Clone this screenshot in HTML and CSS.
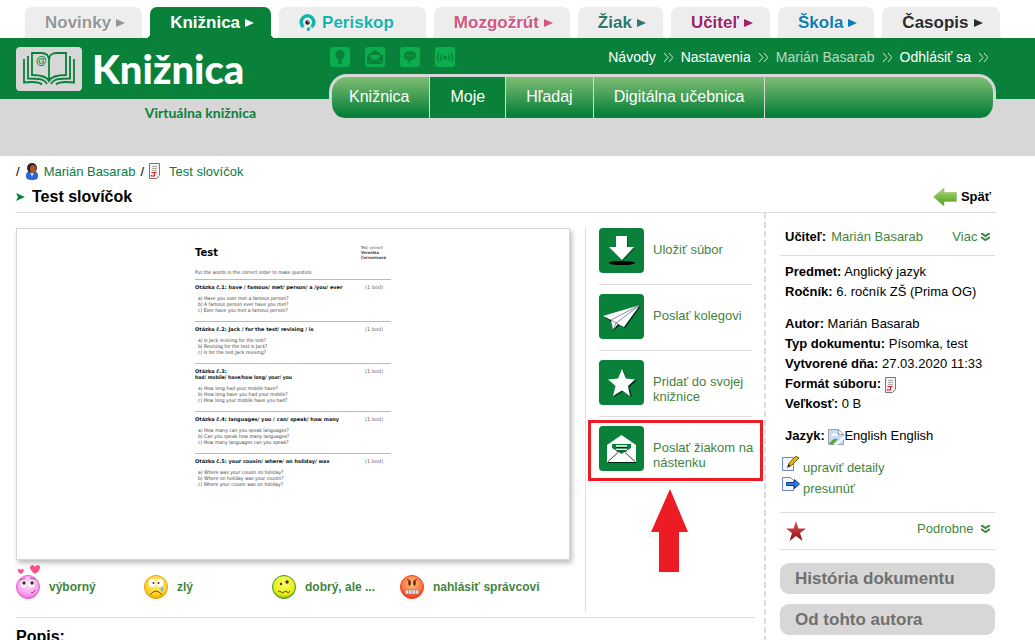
FILE: index.html
```html
<!DOCTYPE html>
<html lang="sk">
<head>
    <meta charset="UTF-8">
    <meta name="viewport" content="width=device-width, initial-scale=1.0">
    <title>Knižnica - Test slovíčok</title>
    <link rel="stylesheet" href="styles.css">
</head>
<body>

    <!-- Portal tabs -->
    <nav class="tabs">
        <a href="#" class="tab novinky">Novinky <i></i></a>
        <a href="#" class="tab active">Knižnica <i></i></a>
        <a href="#" class="tab periskop">
            <svg width="17" height="17" viewBox="0 0 17 17"><path d="M4.500 13A6.300 6.300 0 1 1 12.500 13" fill="none" stroke="#12b5ad" stroke-width="3.500"/><circle cx="8.500" cy="8.500" r="2.200" fill="#222"/><circle cx="9.200" cy="7.800" r=".7" fill="#fff"/><path d="M8 13.500h4l-2 3.500H8z" fill="#12b5ad"/></svg>
            Periskop</a>
        <a href="#" class="tab mozgozrut">Mozgožrút <i></i></a>
        <a href="#" class="tab ziak">Žiak <i></i></a>
        <a href="#" class="tab ucitel">Učiteľ <i></i></a>
        <a href="#" class="tab skola">Škola <i></i></a>
        <a href="#" class="tab casopis">Časopis <i></i></a>
    </nav>

    <!-- Header -->
    <header class="header">
        <div class="brand">
            <div class="brand-top">
                <svg class="logo" width="66" height="44" viewBox="0 0 66 44">
                    <rect width="66" height="44" rx="4" fill="#d7d7d7"/>
                    <g fill="none" stroke="#0a813a" stroke-width="1.800">
                        <path d="M33 34C31 30 27 28 16 28V6h9c5 0 8 2 8 7 0-5 3-7 8-7h9v22c-11 0-15 2-17 6zM33 12v22"/>
                        <path d="M12 9v22.500c10 0 16 0 19 5.500M54 9v22.500c-10 0-16 0-19 5.500"/>
                        <path d="M8 12v23.500c9-1 15-1 18 2M58 12v23.500c-9-1-15-1-18 2"/>
                    </g>
                    <text x="20" y="17" class="logo-at">@</text>
                </svg>
                <span class="brand-name">Knižnica</span>
            </div>
            <div class="brand-sub">Virtuálna knižnica</div>
        </div>
        <div class="header-right">
            <div class="toolbar">
                <div class="quick">
                    <a href="#" aria-label="Tipy"><svg width="20" height="20" viewBox="0 0 20 20"><path d="M10 3a4.500 4.500 0 0 1 3 8l-1 2.500H8L7 11a4.500 4.500 0 0 1 3-8zM8 14h4v2l-1 1H9l-1-1z"/></svg></a>
                    <a href="#" aria-label="Správy"><svg width="20" height="20" viewBox="0 0 20 20"><path d="M2 8.500 10 3l8 5.500V17H2z"/><path d="M5 8h10v2l-5 3-5-3z" fill="#0bae4f"/><path d="M2.500 16.500 8 12M17.500 16.500 12 12" stroke="#0bae4f" fill="none"/></svg></a>
                    <a href="#" aria-label="Diskusia"><svg width="20" height="20" viewBox="0 0 20 20"><path d="M10 4c4 0 6 2 6 4.500S14 13 11 13c0 2-1 3-3 4 1-1.500 1-3 0-4-3-.5-4-2-4-4.500C4 6 6 4 10 4z"/><path d="M7 8h1.500v1.500H7zM9.500 8H11v1.500H9.500zM12 8h1.500v1.500H12z" fill="#0bae4f"/></svg></a>
                    <a href="#" aria-label="Vysielanie"><svg width="20" height="20" viewBox="0 0 20 20"><circle cx="10" cy="10.500" r="2"/><path d="M6.500 7.500q-2 3 0 6M13.500 7.500q2 3 0 6M4 5.500q-3 5 0 10M16 5.500q3 5 0 10" fill="none" stroke="#0a813a" stroke-width="1.300"/></svg></a>
                </div>
                <div class="user-links">
                    <a href="#">Návody</a><svg width="9" height="9" viewBox="0 0 9 9"><path d="M0 0l4 4.500L0 9M5 0l4 4.500L5 9"/></svg>
                    <a href="#">Nastavenia</a><svg width="9" height="9" viewBox="0 0 9 9"><path d="M0 0l4 4.500L0 9M5 0l4 4.500L5 9"/></svg>
                    <a href="#" class="user">Marián Basarab</a><svg width="9" height="9" viewBox="0 0 9 9"><path d="M0 0l4 4.500L0 9M5 0l4 4.500L5 9"/></svg>
                    <a href="#">Odhlásiť sa</a><svg width="9" height="9" viewBox="0 0 9 9"><path d="M0 0l4 4.500L0 9M5 0l4 4.500L5 9"/></svg>
                </div>
            </div>
            <nav class="menu">
                <a href="#">Knižnica</a>
                <a href="#" class="selected">Moje</a>
                <a href="#">Hľadaj</a>
                <a href="#">Digitálna učebnica</a>
            </nav>
        </div>
    </header>

    <div class="page">
        <div class="crumbs">
            <span>/</span>
            <svg width="14" height="17" viewBox="0 0 14 17"><path d="M1 13c0-4 2-5 6-5s6 1 6 5c0 3-2 4-6 4s-6-1-6-4z" fill="#2c65d8"/><path d="M5 9h4l-2 5z" fill="#cfe3ff"/><ellipse cx="7" cy="5" rx="5" ry="5" fill="#33241f"/><ellipse cx="8" cy="6" rx="3" ry="4" fill="#a35a2c"/></svg>
            <a href="#">Marián Basarab</a>
            <span>/</span>
            <svg width="11" height="16" viewBox="0 0 11 16"><path d="M.5.5h10v12l-3 3h-7z" fill="#f4f4f4" stroke="#777"/><path d="M3 3.500h5M3 5.500h5M3 7.500h5" stroke="#aaa"/><path d="M2.500 9.500h5M5.500 9v4H2.500v-1" stroke="#c22" fill="none" stroke-width="1.200"/></svg>
            <a href="#" class="doc-link">Test slovíčok</a>
        </div>

        <div class="title-row">
            <svg width="9" height="8" viewBox="0 0 9 8"><path d="M0 0l9 4-9 4 2-4z" fill="#0a813a"/></svg>
            <h1>Test slovíčok</h1>
            <a href="#" class="back">
                <svg width="24" height="20" viewBox="0 0 24 20"><defs><linearGradient id="arrow" x1="0" y1="0" x2="0" y2="1"><stop offset="0" stop-color="#b0dc70"/><stop offset="1" stop-color="#4a9a1c"/></linearGradient></defs><path d="M.5 10 11 1v4.500h12.500v9H11V19z" fill="url(#arrow)" stroke="#8fbf63" stroke-width=".6"/></svg>
                Späť</a>
        </div>

        <div class="columns">
            <main class="main">
                <div class="document">
                    <div class="left">
                        <div class="preview">
                            <div class="paper">
                                <div class="paper-head">
                                    <h2>Test</h2>
                                    <p>Test vytvoril<br><b>Veronika<br>Červenicová</b></p>
                                </div>
                                <p class="intro">Put the words in the correct order to make question.</p>
                                <section>
                                    <h3>Otázka č.1: have / famous/ met/ person/ a /you/ ever <span>(1 bod)</span></h3>
                                    <p>a) Have you ever met a famous person?<br>b) A famous person ever have you met?<br>c) Ever have you met a famous person?</p>
                                </section>
                                <section>
                                    <h3>Otázka č.2: Jack / for the test/ revising / is <span>(1 bod)</span></h3>
                                    <p>a) Is Jack revising for the test?<br>b) Revising for the test is Jack?<br>c) Is for the test Jack revising?</p>
                                </section>
                                <section>
                                    <h3>Otázka č.3: <span>(1 bod)</span></h3>
                                    <h4>had/ mobile/ have/how long/ your/ you</h4>
                                    <p>a) How long had your mobile have?<br>b) How long have you had your mobile?<br>c) How long your mobile have you had?</p>
                                </section>
                                <section>
                                    <h3>Otázka č.4: languages/ you / can/ speak/ how many <span>(1 bod)</span></h3>
                                    <p>a) How many can you speak languages?<br>b) Can you speak how many languages?<br>c) How many languages can you speak?</p>
                                </section>
                                <section>
                                    <h3>Otázka č.5: your cousin/ where/ on holiday/ was <span>(1 bod)</span></h3>
                                    <p>a) Where was your cousin on holiday?<br>b) Where on holiday was your cousin?<br>c) Where your cousin was on holiday?</p>
                                </section>
                            </div>
                        </div>

                        <div class="ratings">
                            <a href="#">
                                <svg width="24" height="34" viewBox="0 0 24 34"><defs><radialGradient id="pink" cy=".35" r=".7"><stop offset="0" stop-color="#ffe2fb"/><stop offset=".7" stop-color="#fb9cee"/><stop offset="1" stop-color="#e84fc8"/></radialGradient></defs><circle cx="12" cy="22" r="11.500" fill="url(#pink)" stroke="#e45fc5"/><path d="M19 9c-6-4-6-8-3-9 2-.3 3 2 3 2s1-2 3-2c4 1 2 6-3 9zM5 9C1 7 1 4 3 4l2 1 1-1c3 0 2 3-1 5z" fill="#ff4f86"/><ellipse cx="7.500" cy="19" rx="3" ry="3.500" fill="#fff"/><ellipse cx="15.500" cy="19" rx="3" ry="3.500" fill="#fff"/><circle cx="8" cy="18" r="1.700" fill="#333"/><circle cx="16" cy="18" r="1.700" fill="#333"/><path d="M4 15l5-2M14 13l5 1M15 28q3 0 4-3" stroke="#8a2f6f" stroke-width=".8" fill="none"/></svg>
                                výborný</a>
                            <a href="#">
                                <svg width="24" height="34" viewBox="0 0 24 34"><defs><radialGradient id="yellow" cy=".35" r=".7"><stop offset="0" stop-color="#fff58a"/><stop offset=".7" stop-color="#ffd21c"/><stop offset="1" stop-color="#f29400"/></radialGradient></defs><circle cx="12" cy="22" r="11.500" fill="url(#yellow)" stroke="#ee9a1c"/><ellipse cx="8" cy="18" rx="3.500" ry="4" fill="#fff"/><ellipse cx="16" cy="18" rx="3.500" ry="4" fill="#fff"/><circle cx="9.500" cy="18" r="1" fill="#522"/><circle cx="14.500" cy="18" r="1" fill="#522"/><path d="M6 30q6-8 12 0" stroke="#8a4a00" fill="none"/><path d="M18 21q3 5 0 5t0-5z" fill="#68b9ee"/></svg>
                                zlý</a>
                            <a href="#">
                                <svg width="24" height="34" viewBox="0 0 24 34"><defs><radialGradient id="lime" cy=".35" r=".7"><stop offset="0" stop-color="#ffff70"/><stop offset=".7" stop-color="#e4ec10"/><stop offset="1" stop-color="#5ca614"/></radialGradient></defs><circle cx="12" cy="22" r="11.500" fill="url(#lime)" stroke="#3d9640"/><circle cx="9" cy="19" r="1.200" fill="#621"/><circle cx="15" cy="17" r="1.700" fill="#621"/><path d="M6 27q2-2 3 0t3 0 3 0 3-1" stroke="#6b3a00" fill="none"/></svg>
                                dobrý, ale ...</a>
                            <a href="#">
                                <svg width="24" height="34" viewBox="0 0 24 34"><defs><radialGradient id="red" cy=".35" r=".7"><stop offset="0" stop-color="#ffc27a"/><stop offset=".6" stop-color="#ff7a45"/><stop offset="1" stop-color="#f01c08"/></radialGradient></defs><circle cx="12" cy="22" r="11.500" fill="url(#red)" stroke="#f0401c"/><path d="M7 14l3 2M17 14l-3 2" stroke="#621"/><ellipse cx="9.500" cy="18" rx="1.300" ry="3" fill="#621"/><ellipse cx="14.500" cy="18" rx="1.300" ry="3" fill="#621"/><rect x="5" y="25" width="14" height="4" rx="1.500" fill="#fff" stroke="#766" stroke-width=".6"/><path d="M5 27h14M8.500 25v4M12 25v4M15.500 25v4" stroke="#977" stroke-width=".6"/></svg>
                                nahlásiť správcovi</a>
                        </div>
                    </div>

                    <div class="actions">
                        <a href="#">
                            <svg width="45" height="45" viewBox="0 0 45 45"><rect width="45" height="45" rx="4" fill="#0a813a"/><ellipse cx="23" cy="35" rx="13" ry="2" fill="#000"/><path d="M18 9h11v11h7L24 33 11 20h7z" fill="#033" opacity=".6"/><path d="M17 8h11v11h7L23 32 10 19h7z" fill="#fff"/></svg>
                            <span>Uložiť súbor</span></a>
                        <a href="#">
                            <svg width="45" height="45" viewBox="0 0 45 45"><rect width="45" height="45" rx="4" fill="#0a813a"/><path d="M5 23 42 12 26 34l-5-3-7 6-1-9z" fill="#022"/><path d="M4 22 41 11 25 33l-6-3-5 6-2-10z" fill="#fff"/><path d="M41 11 12 26l7 4M14 36l3-7 24-18" stroke="#345" stroke-width=".6" fill="none"/></svg>
                            <span>Poslať kolegovi</span></a>
                        <a href="#">
                            <svg width="45" height="45" viewBox="0 0 45 45"><rect width="45" height="45" rx="4" fill="#0a813a"/><path d="M24 10l4 9.500 10 1-7.500 6.500 2.500 10-9-5.500-9 5.500 2.500-10L10 20.500l10-1z" fill="#032"/><path d="M23 9l4 9.500 9 1-7 6.500 2 10-8-5.500-9 5.500 2.500-10L9 19.500l10-1z" fill="#fff"/></svg>
                            <span>Pridať do svojej<br>knižnice</span></a>
                        <a href="#" class="marked">
                            <svg width="45" height="45" viewBox="0 0 45 45"><rect width="45" height="45" rx="4" fill="#0a813a"/><path d="M9 20 23 10l14 10v17H9z" fill="#021"/><path d="M8 19 22.500 9 37 19v17H8z" fill="#fff"/><path d="M13 18h19v4l-9.500 6L13 22z" fill="#0a813a"/><path d="M17 20h11M17 23.500h11" stroke="#fff" stroke-width="1.500"/><path d="M17 21.500h11M17 25h11M9 35.500l10-9M36 35.500l-10-9" stroke="#111" stroke-width=".8"/></svg>
                            <span>Poslať žiakom na<br>nástenku</span>
                            <svg class="pointer" width="38" height="83" viewBox="0 0 38 83"><path d="M19 0l18 43h-9v40H8V43H0z" fill="#ed1c24"/></svg></a>
                    </div>
                </div>
                <h2 class="section-title">Popis:</h2>
            </main>

            <aside class="sidebar">
                <div class="teacher">
                    <b>Učiteľ:</b> <a href="#">Marián Basarab</a>
                    <a href="#" class="more">Viac <svg width="9" height="8" viewBox="0 0 9 8"><path d="M0 0l4.500 3L9 0M0 4l4.500 3L9 4"/></svg></a>
                </div>
                <div class="info">
                    <p><b>Predmet:</b> Anglický jazyk</p>
                    <p><b>Ročník:</b> 6. ročník ZŠ (Prima OG)</p>
                </div>
                <div class="info">
                    <p><b>Autor:</b> Marián Basarab</p>
                    <p><b>Typ dokumentu:</b> Písomka, test</p>
                    <p><b>Vytvorené dňa:</b> 27.03.2020 11:33</p>
                    <p><b>Formát súboru:</b> <svg width="11" height="16" viewBox="0 0 11 16"><path d="M.5.5h10v12l-3 3h-7z" fill="#f4f4f4" stroke="#777"/><path d="M3 3.500h5M3 5.500h5M3 7.500h5" stroke="#aaa"/><path d="M2.500 9.500h5M5.500 9v4H2.500v-1" stroke="#c22" fill="none" stroke-width="1.200"/></svg></p>
                    <p><b>Veľkosť:</b> 0 B</p>
                </div>
                <div class="info">
                    <p><b>Jazyk:</b> <svg width="16" height="16" viewBox="0 0 16 16"><path d="M.5.5h10l5 5v10H.5z" fill="#c7dbf8" stroke="#a0a0a0"/><path d="M10.500.5v5h5z" fill="#fff" stroke="#a0a0a0"/><path d="M3 7q0-2 2-2 1-2 3 0 2 0 2 2z" fill="#fff"/><path d="M1 15q4-6 9-5l-5 5z" fill="#4ea82c"/><path d="M6 16 16 7v3l-7 6z" fill="#fff"/></svg>English English</p>
                </div>
                <div class="edit-links">
                    <a href="#"><svg width="18" height="18" viewBox="0 0 18 18"><path d="M.5 2.500h11v13H.5z" fill="#f2f6ff" stroke="#6c86c8"/><path d="M6 12l1-4 7-7 3 2-7 7z" fill="#e0b711" stroke="#5b4a00" stroke-width=".8"/><path d="M5 13l1.500-4 2 2z" fill="#222"/></svg> upraviť detaily</a>
                    <a href="#"><svg width="18" height="18" viewBox="0 0 18 18"><path d="M.5 1.500h8l3 3v10H.5z" fill="#f2f6ff" stroke="#6c86c8"/><path d="M4.500 6.500h8v-3L17.500 8l-5 4.500v-3h-8z" fill="#2e7de0" stroke="#123f80"/></svg> presunúť</a>
                </div>
                <div class="rating">
                    <svg width="20" height="20" viewBox="0 0 20 20"><defs><linearGradient id="ruby" x1="0" y1="0" x2="0" y2="1"><stop offset="0" stop-color="#dc5a5e"/><stop offset="1" stop-color="#8f0a12"/></linearGradient></defs><path d="M10 0l2.500 7.500H20l-6 4.500 2.500 8-6.500-5-6.500 5L6 12 0 7.500h7.500z" fill="url(#ruby)"/></svg>
                    <a href="#">Podrobne <svg width="9" height="8" viewBox="0 0 9 8"><path d="M0 0l4.500 3L9 0M0 4l4.500 3L9 4"/></svg></a>
                </div>
                <button class="panel">História dokumentu</button>
                <button class="panel">Od tohto autora</button>
            </aside>
        </div>
    </div>

</body>
</html>
```

FILE: styles.css
```css
body {
    margin: 0;
    background: #fff;
    color: #000;
    font-family: "Liberation Sans", Arial, sans-serif;
    font-size: 13px;
}
a {
    color: #3f8540;
    text-decoration: none;
}
h1, h2, h3, h4, p {
    margin: 0;
}

/* Tabs */
.tabs {
    display: flex;
    gap: 8px;
    padding: 7px 30px 0 25px;
}
.tab {
    position: relative;
    display: flex;
    align-items: center;
    box-sizing: border-box;
    height: 31px;
    padding: 0 17px 0 20px;
    background: #ededed;
    border-radius: 7px 7px 0 0;
    font-size: 17px;
    font-weight: bold;
    white-space: nowrap;
    text-shadow: 1px 1px 0 #fff;
}
.tab::before, .tab::after {
    content: "";
    position: absolute;
    bottom: 0;
    width: 4px;
    height: 4px;
}
.tab::before {
    left: -4px;
    background: radial-gradient(circle at 0 0, transparent 4px, #ededed 4px);
}
.tab::after {
    right: -4px;
    background: radial-gradient(circle at 100% 0, transparent 4px, #ededed 4px);
}
.tab i {
    margin-left: 5px;
    border-left: 9px solid currentColor;
    border-top: 4px solid transparent;
    border-bottom: 4px solid transparent;
}
.tab svg {
    margin-right: 6px;
}
.tab.active {
    background: #0a813a;
    color: #fff;
    text-shadow: none;
}
.tab.active::before {
    background: radial-gradient(circle at 0 0, transparent 4px, #0a813a 4px);
}
.tab.active::after {
    background: radial-gradient(circle at 100% 0, transparent 4px, #0a813a 4px);
}
.novinky { color: #969696; }
.periskop { color: #12b5ad; padding-right: 32px; }
.mozgozrut { color: #d4577f; }
.ziak { color: #2c776c; }
.ucitel { color: #a31f68; }
.skola { color: #0a7fb5; }
.casopis { color: #2b2b2b; }

/* Header */
.header {
    display: flex;
    padding: 0 39px 38px 16px;
    padding-bottom: 38px;
    background: linear-gradient(#0a813a 61px, #d7d7d7 61px);
}
.brand {
    flex: none;
    width: 313px;
    height: 80px;
    box-sizing: border-box;
    padding-top: 9px;
}
.brand-top {
    display: flex;
    align-items: center;
    height: 44px;
}
.logo-at {
    font-size: 11px;
    font-weight: bold;
    fill: #0a813a;
}
.brand-name {
    margin-left: 10px;
    color: #fff;
    font-family: Lato, sans-serif;
    font-size: 40px;
    font-weight: 900;
}
.brand-sub {
    width: 240px;
    margin-top: 13px;
    color: #0a813a;
    font-family: Lato, sans-serif;
    font-size: 14px;
    font-weight: bold;
    line-height: 18px;
    text-align: right;
}
.header-right {
    flex: 1;
}
.toolbar {
    display: flex;
    justify-content: space-between;
    align-items: center;
    height: 36px;
    padding-right: 8px;
    padding-top: 2px;
    box-sizing: border-box;
}
.quick {
    display: flex;
    gap: 15px;
    padding-left: 1px;
}
.quick a {
    height: 20px;
    background: #0bae4f;
    border-radius: 3px;
}
.quick svg {
    display: block;
    fill: #0a813a;
}
.user-links {
    display: flex;
    align-items: center;
    font-size: 14px;
}
.user-links a {
    color: #fff;
}
.user-links a.user {
    color: #b9d9c2;
}
.user-links svg {
    margin: 0 8px;
    fill: none;
    stroke: #d5e8da;
}
.user-links svg:last-child {
    margin-right: 0;
}
.menu {
    display: flex;
    overflow: hidden;
    border: 3px solid #d7d7d7;
    border-bottom: 0;
    border-radius: 18px 18px 15px 15px;
    background: linear-gradient(#80bd74, #0a813a 90%);
}
.menu a {
    padding: 0 20px 2px;
    border-right: 1px solid #d7d7d7;
    color: #fff;
    font-size: 16px;
    line-height: 39px;
}
.menu a:first-child {
    padding-left: 17px;
}
.menu a.selected {
    background: #0a813a;
}

/* Breadcrumbs and title */
.page {
    padding: 5px 39px 0 16px;
}
.crumbs {
    display: flex;
    align-items: center;
    gap: 5px;
    height: 20px;
}
.crumbs a {
    color: #0a7a42;
}
.crumbs a.doc-link {
    margin-left: 4px;
}
.title-row {
    display: flex;
    align-items: center;
    height: 31px;
    border-bottom: 1px solid #ddd;
}
.title-row h1 {
    flex: 1;
    margin-left: 7px;
    font-size: 16px;
}
.back {
    display: flex;
    align-items: center;
    gap: 4px;
    margin-right: 5px;
    color: #000;
    font-weight: bold;
}

/* Columns */
.columns {
    display: flex;
    gap: 9px;
}
.main {
    flex: 1;
    padding-top: 15px;
}
.document {
    display: flex;
    padding-bottom: 5px;
    border-bottom: 1px solid #ddd;
}
.left {
    flex: 1;
    padding: 0 15px 13px 0;
    border-right: 1px solid #ddd;
}
.preview {
    padding: 16px 0 64px;
    border: 1px solid #d7d7d7;
    box-shadow: 2px 3px 5px #bbb;
}

/* Scanned test inside the preview */
.paper {
    width: 196px;
    margin: 0 auto;
    color: #444;
    font-family: "DejaVu Sans Condensed", "DejaVu Sans", sans-serif;
    font-size: 5px;
    line-height: 6px;
}
.paper-head {
    display: flex;
    justify-content: space-between;
    align-items: center;
}
.paper-head h2 {
    color: #000;
    font-family: "DejaVu Sans", sans-serif;
    font-size: 10px;
    line-height: 15px;
}
.paper-head p {
    width: 30px;
    font-size: 4px;
    line-height: 5px;
}
.paper .intro {
    padding: 9px 0 4px;
}
.paper section {
    padding: 4px 0 8px;
    border-top: 1px solid #bbb;
}
.paper h3 {
    display: flex;
    justify-content: space-between;
    color: #111;
    font-family: "DejaVu Sans", sans-serif;
    font-size: 5px;
    white-space: nowrap;
}
.paper h3 span {
    width: 26px;
    color: #666;
    font-weight: normal;
}
.paper h4 {
    color: #111;
    font-size: 5px;
}
.paper section p {
    padding: 5px 0 0 3px;
}

.ratings {
    display: flex;
    padding-top: 5px;
}
.ratings a {
    display: flex;
    align-items: flex-end;
    gap: 9px;
    width: 128px;
    font-size: 12px;
    font-weight: bold;
    line-height: 24px;
    white-space: nowrap;
}
.ratings svg, .actions svg {
    flex: none;
}

.actions {
    flex: none;
    width: 153px;
    padding: 0 3px 0 13px;
}
.actions a {
    position: relative;
    display: flex;
    gap: 9px;
    height: 45px;
    margin-bottom: 9px;
    padding-bottom: 11px;
    border-bottom: 1px solid #ddd;
    line-height: 15px;
    white-space: nowrap;
}
.actions span {
    padding-top: 14px;
}
/* red frame and arrow lie over the last action */
.actions .marked::after {
    content: "";
    position: absolute;
    top: -6px;
    left: -11px;
    right: -11px;
    height: 55px;
    border: 3px solid #ed1c24;
}
.pointer {
    position: absolute;
    top: 63px;
    left: 52px;
}
.section-title {
    padding: 10px 0;
    font-size: 16px;
    line-height: 18px;
}

/* Sidebar */
.sidebar {
    flex: none;
    box-sizing: border-box;
    width: 232px;
    padding: 14px 1px 15px 16px;
    background: repeating-linear-gradient(#ddd 0 6px, transparent 6px 9px) left / 2px 100% no-repeat;
}
.teacher {
    display: flex;
    gap: 5px;
    padding: 0 5px 9px;
    border-bottom: 1px solid #ddd;
    line-height: 19px;
}
.teacher .more {
    margin-left: auto;
}
.more svg, .rating a svg {
    fill: none;
    stroke: #3f8540;
    stroke-width: 2;
}
.info {
    padding: 6px 0 6px 5px;
    line-height: 20px;
}
.info svg {
    vertical-align: middle;
}
.edit-links {
    display: flex;
    flex-direction: column;
    padding: 3px 0 15px 2px;
}
.edit-links a {
    display: flex;
    gap: 3px;
    height: 21px;
    line-height: 26px;
}
.rating {
    display: flex;
    justify-content: space-between;
    padding: 8px 5px 8px 6px;
    margin-bottom: 13px;
    border: solid #ddd;
    border-width: 1px 0;
    line-height: 16px;
}
.rating a svg {
    margin-left: 4px;
}
.panel {
    display: block;
    width: 100%;
    height: 31px;
    margin-bottom: 10px;
    padding: 0 15px;
    border: 0;
    border-radius: 9px;
    background: #d7d7d7;
    color: #707070;
    font-family: inherit;
    font-size: 17px;
    font-weight: bold;
    text-align: left;
    cursor: pointer;
}
```
